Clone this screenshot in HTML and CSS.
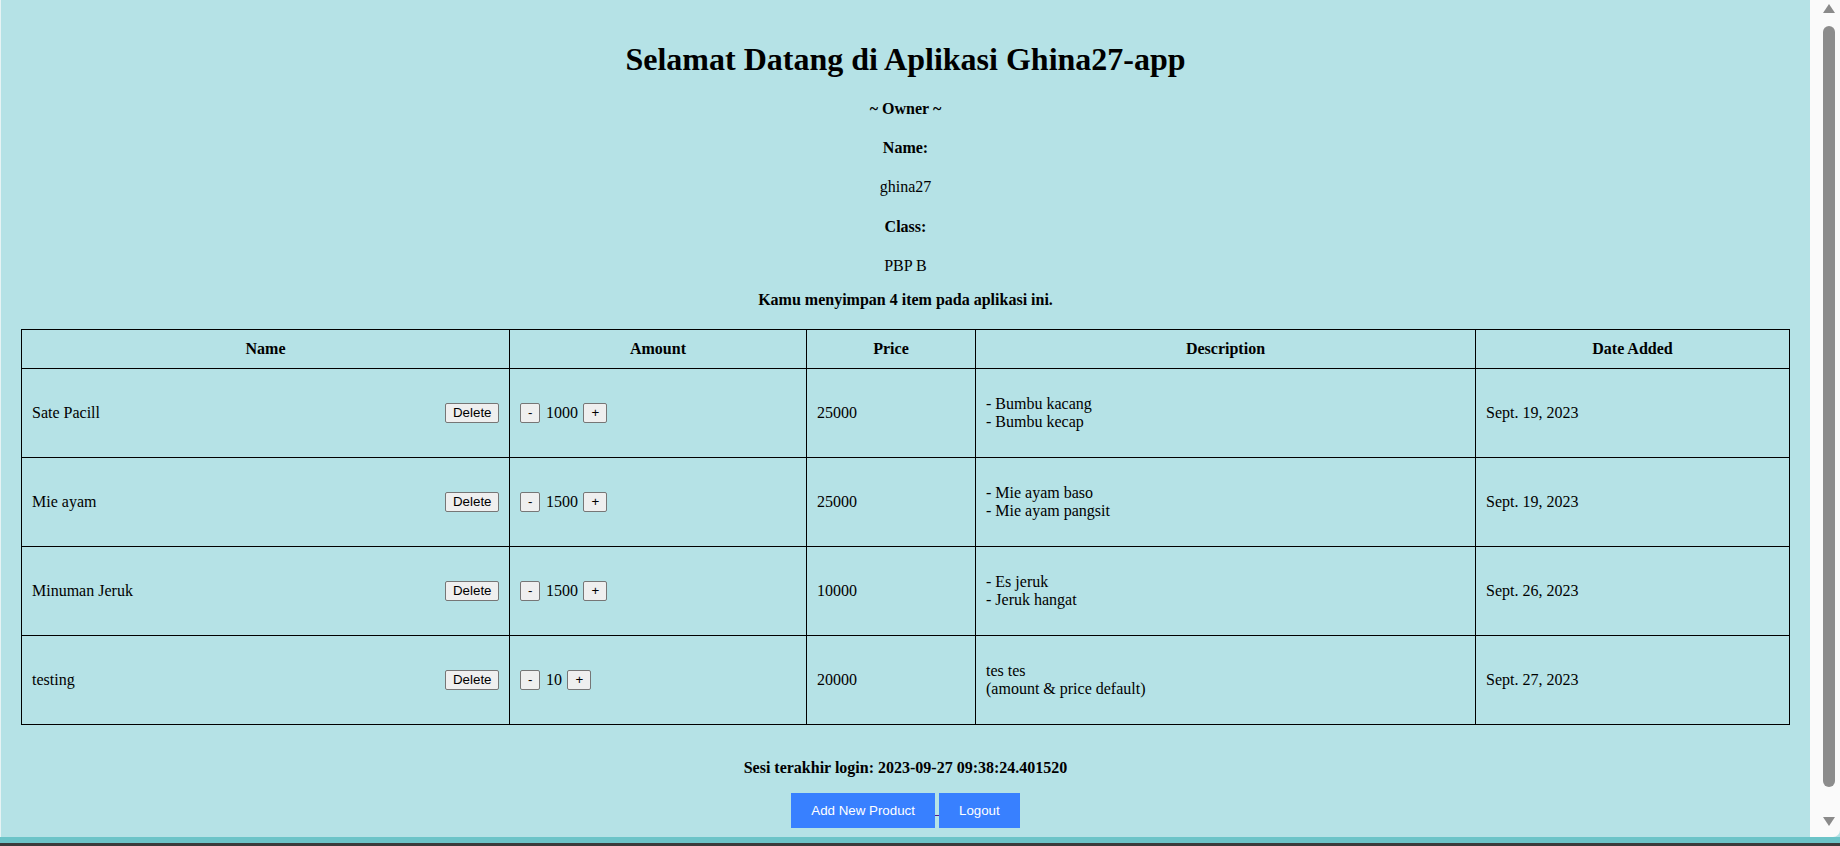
FILE: index.html
```html
<!DOCTYPE html>
<html lang="id">
<head>
<meta charset="utf-8">
<title>Ghina27-app</title>
<link rel="stylesheet" href="styles.css">
</head>
<body>
<div class="window">
  <div class="viewport">
    <main class="page">
      <h1 class="title">Selamat Datang di Aplikasi Ghina27-app</h1>
      <h4 class="label">~ Owner ~</h4>
      <h4 class="label">Name:</h4>
      <p class="value">ghina27</p>
      <h4 class="label">Class:</h4>
      <p class="value">PBP B</p>
      <p class="count"><strong>Kamu menyimpan 4 item pada aplikasi ini.</strong></p>

      <table class="products">
        <colgroup>
          <col class="c-name">
          <col class="c-amount">
          <col class="c-price">
          <col class="c-desc">
          <col class="c-date">
        </colgroup>
        <thead>
          <tr>
            <th>Name</th>
            <th>Amount</th>
            <th>Price</th>
            <th>Description</th>
            <th>Date Added</th>
          </tr>
        </thead>
        <tbody>
          <tr>
            <td><div class="name-cell"><span>Sate Pacill</span><button class="ui-btn">Delete</button></div></td>
            <td><div class="qty"><button class="ui-btn">-</button><span>1000</span><button class="ui-btn">+</button></div></td>
            <td>25000</td>
            <td><p class="desc">- Bumbu kacang<br>- Bumbu kecap</p></td>
            <td>Sept. 19, 2023</td>
          </tr>
          <tr>
            <td><div class="name-cell"><span>Mie ayam</span><button class="ui-btn">Delete</button></div></td>
            <td><div class="qty"><button class="ui-btn">-</button><span>1500</span><button class="ui-btn">+</button></div></td>
            <td>25000</td>
            <td><p class="desc">- Mie ayam baso<br>- Mie ayam pangsit</p></td>
            <td>Sept. 19, 2023</td>
          </tr>
          <tr>
            <td><div class="name-cell"><span>Minuman Jeruk</span><button class="ui-btn">Delete</button></div></td>
            <td><div class="qty"><button class="ui-btn">-</button><span>1500</span><button class="ui-btn">+</button></div></td>
            <td>10000</td>
            <td><p class="desc">- Es jeruk<br>- Jeruk hangat</p></td>
            <td>Sept. 26, 2023</td>
          </tr>
          <tr>
            <td><div class="name-cell"><span>testing</span><button class="ui-btn">Delete</button></div></td>
            <td><div class="qty"><button class="ui-btn">-</button><span>10</span><button class="ui-btn">+</button></div></td>
            <td>20000</td>
            <td><p class="desc">tes tes<br>(amount &amp; price default)</p></td>
            <td>Sept. 27, 2023</td>
          </tr>
        </tbody>
      </table>

      <p class="session"><strong>Sesi terakhir login: 2023-09-27 09:38:24.401520</strong></p>

      <div class="actions">
        <a class="btn-link" href="#"><button class="btn">Add New Product</button></a>
        <span class="link-gap"></span>
        <a class="btn-link" href="#"><button class="btn">Logout</button></a>
      </div>
    </main>
    <div class="scrollbar">
      <span class="arrow-up"></span>
      <div class="thumb"></div>
      <span class="arrow-down"></span>
    </div>
  </div>
  <div class="band"></div>
  <div class="base"></div>
</div>
</body>
</html>
```

FILE: styles.css
```css
html, body {
  margin: 0;
  padding: 0;
  height: 846px;
  overflow: hidden;
}

.window {
  display: flex;
  flex-direction: column;
  height: 846px;
  background: #6cc4c8;
}

.viewport {
  display: flex;
  height: 837px;
  flex: none;
  background: #b5e2e6;
  border-left: 1px solid #e6f3f4;
}

.page {
  flex: 1;
  min-width: 0;
  overflow: hidden;
  background: #b5e2e6;
  padding: 20px 20px 0 20px;
  font-family: "Liberation Serif", "Times New Roman", serif;
  font-size: 16px;
  line-height: 18px;
  color: #000;
  text-align: center;
}

.title {
  font-size: 32px;
  line-height: 37px;
  font-weight: bold;
  margin: 21.44px 0;
}

.label {
  font-size: 16px;
  font-weight: bold;
  margin: 21.28px 0;
}

.value {
  margin: 16px 0;
}

.count {
  margin: 16px 0;
}

.products {
  width: 1768px;
  margin-top: 20px;
  border-collapse: collapse;
  table-layout: fixed;
  text-align: left;
}

.c-name { width: 488px; }
.c-amount { width: 297px; }
.c-price { width: 169px; }
.c-desc { width: 500px; }
.c-date { width: 314px; }

.products th,
.products td {
  border: 1px solid #000;
  padding: 10px;
  vertical-align: middle;
}

.products th {
  text-align: center;
  font-weight: bold;
}

.name-cell {
  display: flex;
  justify-content: space-between;
  align-items: center;
}

.qty {
  display: flex;
  align-items: center;
  gap: 5.5px;
}

.desc {
  margin: 16px 0;
}

.ui-btn {
  font-family: "Liberation Sans", Arial, sans-serif;
  font-size: 13.333px;
  line-height: 16px;
  color: #000;
  background: #efefef;
  border: 1px solid #767676;
  border-radius: 2px;
  padding: 1px 6.5px;
  margin: 0;
}

.qty .ui-btn {
  padding: 1px 7px;
}

.session {
  margin: 34px 0 16px;
}

.actions {
  display: flex;
  justify-content: center;
}

.btn-link {
  display: block;
  text-decoration: none;
}

.link-gap {
  width: 4px;
  height: 23px;
  border-bottom: 1px solid #551a8b;
  box-sizing: border-box;
}

.btn {
  display: block;
  font-family: "Liberation Sans", Arial, sans-serif;
  font-size: 13.333px;
  line-height: 15px;
  color: #fff;
  background: #3880ff;
  border: none;
  padding: 10px 20px;
  margin: 0;
}

.scrollbar {
  width: 30px;
  flex: none;
  background: #fafafa;
  border-bottom-right-radius: 7px;
  display: flex;
  flex-direction: column;
  align-items: flex-start;
  padding: 4px 0 11px 13px;
  box-sizing: border-box;
}

.arrow-up {
  width: 0;
  height: 0;
  border-left: 6px solid transparent;
  border-right: 6px solid transparent;
  border-bottom: 9px solid #8a8a8a;
}

.thumb {
  width: 12px;
  height: 761px;
  margin-top: 13px;
  background: #8c8c8c;
  border-radius: 6px;
}

.arrow-down {
  margin-top: auto;
  width: 0;
  height: 0;
  border-left: 6px solid transparent;
  border-right: 6px solid transparent;
  border-top: 9px solid #8a8a8a;
}

.band {
  height: 6px;
  flex: none;
  background: #6cc4c8;
}

.base {
  height: 3px;
  flex: none;
  background: #3b3b3b;
}
```
